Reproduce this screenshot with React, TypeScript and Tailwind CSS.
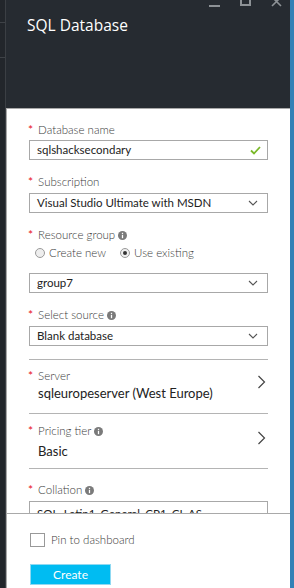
import React from "react";

const font = { fontFamily: 'Lato, "Open Sans", sans-serif' };

function Info() {
  return <svg width="9" height="9" viewBox="0 0 10 10" className="ml-[3px] inline-block">
      <circle cx="5" cy="5" r="5" fill="#7a7a7a" />
      <rect x="4.3" y="4.2" width="1.4" height="3.8" fill="#fff" />
      <rect x="4.3" y="2" width="1.4" height="1.3" fill="#fff" />
    </svg>;
}

function Label({ text, info }: { text: string; info?: boolean }) {
  return <div className="flex items-center h-4 text-[11.5px] text-[#3a3a3a] font-light">
      <span className="text-[#e81123] text-[12px] mr-[5px] -ml-[1px] font-normal">*</span>
      <span>{text}</span>
      {info && <Info />}
    </div>;
}

function Caret() {
  return <svg width="10" height="6" viewBox="0 0 10 6" className="shrink-0">
      <polyline points="1,1 5,5 9,1" fill="none" stroke="#555" strokeWidth="1.1" />
    </svg>;
}

function Select({ value }: { value: string }) {
  return <div className="h-5 border border-[#a8a8a8] flex items-center justify-between pl-[7px] pr-[9px] text-[11.5px] text-[#222]">
      <span>{value}</span>
      <Caret />
    </div>;
}

function Chevron() {
  return <svg width="9" height="14" viewBox="0 0 9 14">
      <polyline points="1.5,1 7.5,7 1.5,13" fill="none" stroke="#444" strokeWidth="1.2" />
    </svg>;
}

function Radio({ checked, label }: { checked?: boolean; label: string }) {
  return <div className="flex items-center gap-[4px]">
      <span className="w-[10px] h-[10px] rounded-full border border-[#9a9a9a] bg-[#eee] flex items-center justify-center">
        {checked && <span className="w-[4px] h-[4px] rounded-full bg-[#333]" />}
      </span>
      <span>{label}</span>
    </div>;
}

export default function App() {
  return <div className="w-[294px] h-[588px] flex overflow-hidden bg-[#23272c]" style={font}>
      <div className="w-[6px] flex flex-col bg-[#22262b] border-r border-[#3b3f44]">
        <div className="h-[23px] border-b border-[#3e4247]" />
        <div className="h-[35px] border-b border-[#3e4247]" />
      </div>
      <div className="flex-1 flex flex-col">
        <div className="h-[109px] bg-[#262b31] border-b border-[#a9a9a9] relative shrink-0">
          <div className="absolute top-[-3px] right-[8px] flex items-start gap-[20px]">
            <div className="w-[11px] h-[10px] border-b-2 border-[#8d9296]" />
            <div className="w-[11px] h-[9px] border-2 border-[#8d9296]" />
            <svg width="11" height="10" viewBox="0 0 11 10">
              <path d="M1 0 L10 9 M10 0 L1 9" stroke="#8d9296" strokeWidth="1.6" />
            </svg>
          </div>
          <div className="pl-[21px] pt-[14px] text-white text-[15.5px]" style={{ fontFamily: '"Open Sans", sans-serif' }}>SQL Database</div>
        </div>
        <div className="h-[404px] bg-white border-l border-[#a9a9a9] overflow-hidden pl-[22px] pr-[22px] pt-[13px] shrink-0">
          <Label text="Database name" />
          <div className="mt-[2px] h-5 border border-[#a8a8a8] flex items-center justify-between pl-[7px] pr-[6px] text-[11.5px] text-[#222]">
            <span>sqlshacksecondary</span>
            <svg width="11" height="9" viewBox="0 0 11 9">
              <polyline points="1,4.5 4,7.5 10,1" fill="none" stroke="#7ab929" strokeWidth="1.8" />
            </svg>
          </div>

          <div className="mt-[14px]"><Label text="Subscription" /></div>
          <div className="mt-[3px]"><Select value="Visual Studio Ultimate with MSDN" /></div>

          <div className="mt-[14px]"><Label text="Resource group" info /></div>
          <div className="mt-[2px] h-4 flex items-center gap-[14px] pl-[6px] text-[11.5px] text-[#3a3a3a] font-light">
            <Radio label="Create new" />
            <Radio checked label="Use existing" />
          </div>
          <div className="mt-[12px]"><Select value="group7" /></div>

          <div className="mt-[14px]"><Label text="Select source" info /></div>
          <div className="mt-[3px]"><Select value="Blank database" /></div>

          <div className="mt-[13px] border-t border-[#b4b4b4]" />
          <div className="flex items-center justify-between pr-[2px]">
            <div>
              <div className="mt-[8px]"><Label text="Server" /></div>
              <div className="h-5 flex items-center text-[13px] text-[#222] pl-[9px]">sqleuropeserver (West Europe)</div>
            </div>
            <Chevron />
          </div>

          <div className="mt-[9px] border-t border-[#b4b4b4]" />
          <div className="flex items-center justify-between pr-[2px]">
            <div>
              <div className="mt-[9px]"><Label text="Pricing tier" info /></div>
              <div className="mt-[3px] h-5 flex items-center text-[13px] text-[#222] pl-[9px]">Basic</div>
            </div>
            <Chevron />
          </div>

          <div className="mt-[6px] border-t border-[#b4b4b4]" />
          <div className="mt-[13px]"><Label text="Collation" info /></div>
          <div className="mt-[3px] h-5 border border-[#a8a8a8] flex items-center pl-[7px] pt-[6px] text-[11.5px] text-[#222]">
            SQL_Latin1_General_CP1_CI_AS
          </div>
        </div>
        <div className="flex-1 bg-white border-t border-l border-[#a9a9a9] pl-[23px] pt-[17px]">
          <div className="flex items-center gap-[6px] text-[11.5px] text-[#3a3a3a] font-light">
            <span className="w-[15px] h-[14px] border border-[#999] bg-white" />
            <span>Pin to dashboard</span>
          </div>
          <div className="mt-[16px] w-[81px] h-[21px] bg-[#00bcf2] border border-[#8fd9f2] text-white text-[12px] flex items-center justify-center">
            Create
          </div>
        </div>
      </div>
      <div className="w-[4px] bg-[#3381b6]" />
    </div>;
}
